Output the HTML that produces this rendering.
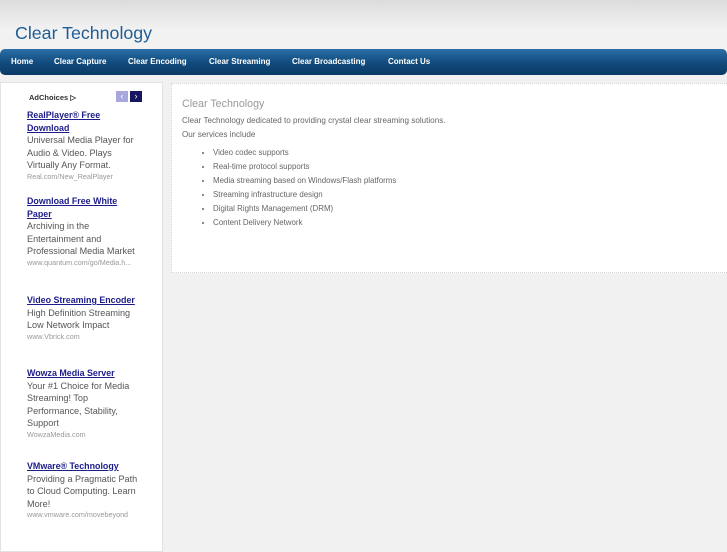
<!DOCTYPE html>
<html><head><style>
*{margin:0;padding:0;box-sizing:border-box}
body{width:727px;height:545px;overflow:hidden;background:#f1f1f1;font-family:"Liberation Sans",sans-serif;position:relative}
.hdr{position:absolute;left:0;top:0;width:727px;height:48px;background:linear-gradient(#dcdcdc,#f2f2f2 30px)}
.logo{position:absolute;left:15px;top:23px;font-size:17.8px;color:#1f5d96}
.nav{position:absolute;left:0;top:49px;width:727px;height:26px;border-radius:5px;background:linear-gradient(#2a6fa6,#114a7c 55%,#0a3a66)}
.nav span{position:absolute;top:8px;font-size:8px;font-weight:bold;color:#fff}
.side{position:absolute;left:0;top:82px;width:163px;height:470px;background:#fff;border:1px solid #e2e2e2}
.main{position:absolute;left:171px;top:83px;width:560px;height:190px;background:#fff;border:1px dotted #d6d6d6}
.ad{position:absolute;left:27px;width:112px}
.t{font-size:8.9px;font-weight:bold;color:#1c1c8a;text-decoration:underline;line-height:12.5px}
.b{font-size:9.1px;color:#555;line-height:12.6px}
.u{font-size:7.2px;color:#999;line-height:10px;white-space:nowrap}
li{font-size:7.9px;color:#666;line-height:14.1px;margin-left:41px}
</style></head><body>
<div class="hdr"></div>
<div class="logo">Clear Technology</div>
<div class="nav">
<span style="left:11px">Home</span><span style="left:54px">Clear Capture</span><span style="left:128px">Clear Encoding</span><span style="left:209px">Clear Streaming</span><span style="left:292px">Clear Broadcasting</span><span style="left:388px">Contact Us</span>
</div>
<div class="side">
<div style="position:absolute;left:28px;top:10px;font-size:7.5px;font-weight:bold;color:#333">AdChoices ▷</div>
<div style="position:absolute;left:115px;top:8px;width:12px;height:11px;background:#a7a7dd;color:#fff;font-size:9px;text-align:center;line-height:11px">‹</div>
<div style="position:absolute;left:129px;top:8px;width:12px;height:11px;background:#151560;color:#fff;font-size:9px;text-align:center;line-height:11px">›</div>
</div>
<div class="ad" style="top:109px"><div class="t">RealPlayer® Free Download</div><div class="b">Universal Media Player for Audio &amp; Video. Plays Virtually Any Format.</div><div class="u">Real.com/New_RealPlayer</div></div>
<div class="ad" style="top:195px"><div class="t">Download Free White Paper</div><div class="b">Archiving in the Entertainment and Professional Media Market</div><div class="u">www.quantum.com/go/Media.h...</div></div>
<div class="ad" style="top:294px"><div class="t">Video Streaming Encoder</div><div class="b">High Definition Streaming Low Network Impact</div><div class="u">www.Vbrick.com</div></div>
<div class="ad" style="top:367px"><div class="t">Wowza Media Server</div><div class="b">Your #1 Choice for Media Streaming! Top Performance, Stability, Support</div><div class="u">WowzaMedia.com</div></div>
<div class="ad" style="top:460px"><div class="t">VMware® Technology</div><div class="b">Providing a Pragmatic Path to Cloud Computing. Learn More!</div><div class="u">www.vmware.com/movebeyond</div></div>
<div class="main">
<div style="position:absolute;left:10px;top:14px;font-size:10.7px;color:#999">Clear Technology</div>
<div style="position:absolute;left:10px;top:30px;font-size:8.1px;color:#666;line-height:14px;white-space:nowrap">Clear Technology dedicated to providing crystal clear streaming solutions.<br>Our services include</div>
<ul style="position:absolute;left:0;top:62px;list-style:disc;color:#666">
<li>Video codec supports</li><li>Real-time protocol supports</li><li>Media streaming based on Windows/Flash platforms</li><li>Streaming infrastructure design</li><li>Digital Rights Management (DRM)</li><li>Content Delivery Network</li>
</ul>
</div>
</body></html>
